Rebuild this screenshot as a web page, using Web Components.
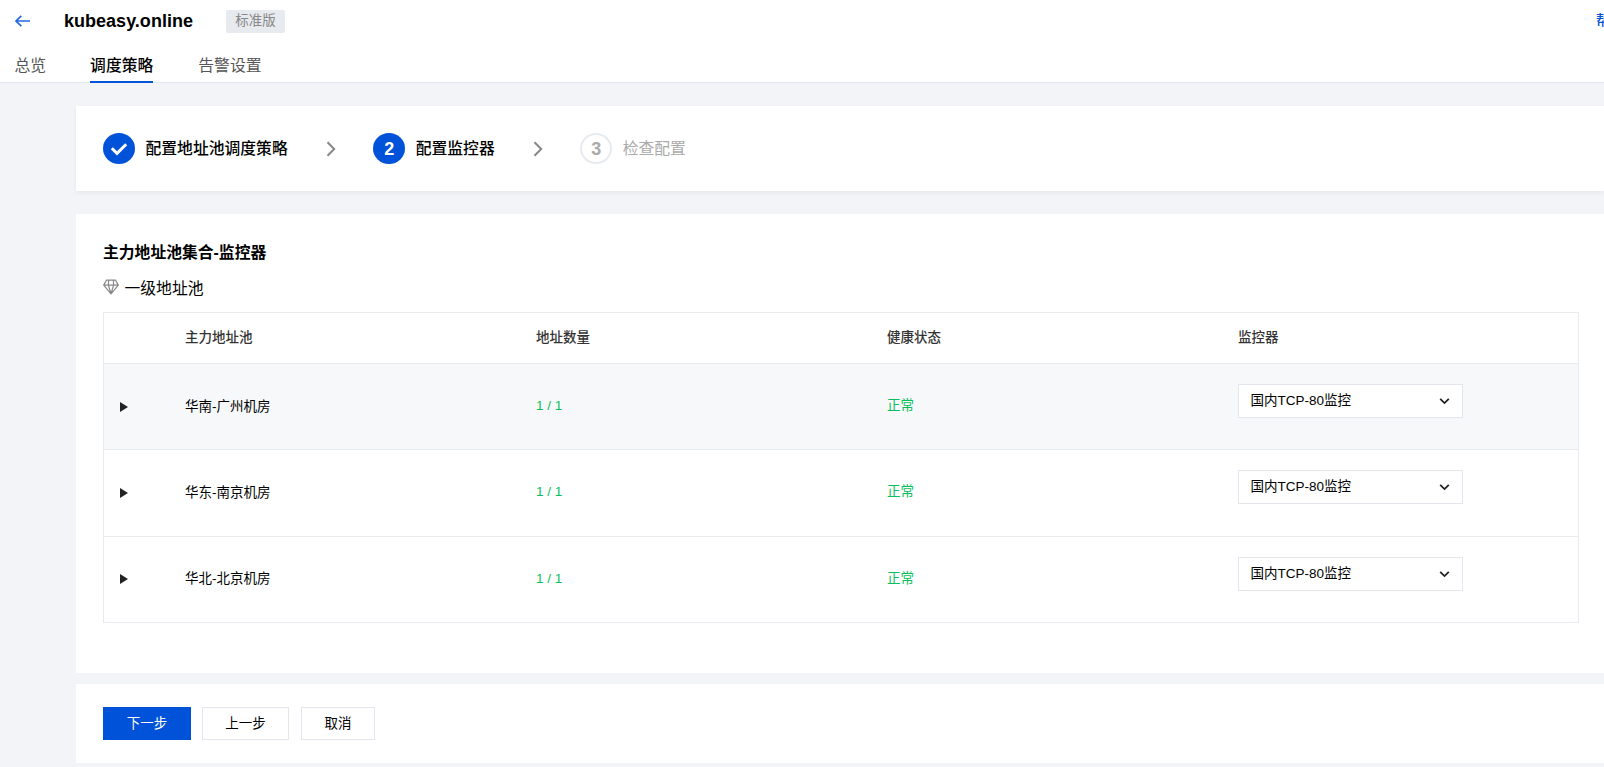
<!DOCTYPE html>
<html lang="zh-CN">
<head>
<meta charset="utf-8">
<title>kubeasy.online</title>
<style>
    :root {
        --blue: #0052d9;
        --green: #0abf5b;
        --line: #e7eaef;
        --page: #f2f4f8;
    }
    body {
        margin: 0;
        height: 767px;
        overflow: hidden;
        background: var(--page);
        color: #000;
        font: 13.5px/20px "Liberation Sans", "Noto Sans CJK SC", sans-serif;
    }
    main {
        display: flex;
        flex-direction: column;
        padding: 23px 0 0 76px;
    }
</style>
</head>
<body>
<page-header data-title="kubeasy.online" data-version="标准版" data-help="帮">
    <nav-tab>总览</nav-tab>
    <nav-tab active>调度策略</nav-tab>
    <nav-tab>告警设置</nav-tab>
</page-header>
<main>
    <page-card style="height: 85px; margin-bottom: 23px;" raised>
        <step-bar>
            <step-item data-state="done" data-number="1">配置地址池调度策略</step-item>
            <step-item data-state="current" data-number="2">配置监控器</step-item>
            <step-item data-state="wait" data-number="3">检查配置</step-item>
        </step-bar>
    </page-card>
    <page-card style="height: 459px; margin-bottom: 11px;">
        <pool-section data-header="主力地址池集合-监控器" data-level="一级地址池">
            <pool-table></pool-table>
        </pool-section>
    </page-card>
    <page-card style="height: 79px;">
        <action-bar>
            <action-button primary style="width: 88px;">下一步</action-button>
            <action-button style="width: 87px; margin-right: 1px;">上一步</action-button>
            <action-button style="width: 74px;">取消</action-button>
        </action-bar>
    </page-card>
</main>

<script>
class PageHeader extends HTMLElement {

    constructor() {
        super();
        this.attachShadow({ mode: 'open' });
    }

    connectedCallback() {
        this.shadowRoot.innerHTML = `
            <style>
                :host {
                    display: flex;
                    flex-direction: column;
                    box-sizing: border-box;
                    height: 83px;
                    background: #fff;
                    border-bottom: 1px solid #e3e6ef;
                }
                .top {
                    display: flex;
                    align-items: center;
                    height: 43px;
                    padding-left: 14px;
                    overflow: hidden;
                }
                svg { display: block; width: 17px; height: 14px; }
                h1 {
                    margin: 0 0 0 33px;
                    width: 162px;
                    font-size: 18px;
                    line-height: 24px;
                    letter-spacing: .02px;
                }
                .version {
                    box-sizing: border-box;
                    width: 59px;
                    height: 23px;
                    line-height: 21px;
                    text-align: center;
                    border-radius: 2px;
                    background: #e7eaef;
                    color: #888;
                }
                .help {
                    margin-left: auto;
                    margin-bottom: 1px;
                    width: 8px;
                    white-space: nowrap;
                    font-weight: 500;
                    color: var(--blue);
                }
                nav {
                    display: flex;
                    gap: 45px;
                    height: 40px;
                    padding-left: 14.5px;
                }
            </style>
            <div class="top">
                <svg viewBox="0 0 17 14" fill="none" stroke="#2468e0" stroke-width="1.7">
                    <path d="M7.3 1.8 2 7l5.3 5.2M2 7h14"/>
                </svg>
                <h1>${this.dataset.title}</h1>
                <span class="version">${this.dataset.version}</span>
                <span class="help">${this.dataset.help}</span>
            </div>
            <nav><slot></slot></nav>
        `;
    }
}

class NavTab extends HTMLElement {

    constructor() {
        super();
        this.attachShadow({ mode: 'open' });
    }

    connectedCallback() {
        this.shadowRoot.innerHTML = `
            <style>
                :host {
                    display: block;
                    box-sizing: border-box;
                    height: 40px;
                    padding-top: 12px;
                    font-size: 15.8px;
                    line-height: 24px;
                    color: #555;
                }
                /* the underline covers the header's bottom border */
                :host([active]) {
                    height: 41px;
                    margin-left: -1px;
                    border-bottom: 2px solid var(--blue);
                    color: #000;
                    font-weight: 500;
                }
            </style>
            <slot></slot>
        `;
    }
}

class PageCard extends HTMLElement {

    constructor() {
        super();
        this.attachShadow({ mode: 'open' });
    }

    connectedCallback() {
        this.shadowRoot.innerHTML = `
            <style>
                :host {
                    display: block;
                    box-sizing: border-box;
                    padding-left: 27px;
                    background: #fff;
                }
                :host([raised]) {
                    box-shadow: 0 2px 4px rgba(54, 58, 80, .06);
                }
            </style>
            <slot></slot>
        `;
    }
}

class StepBar extends HTMLElement {

    constructor() {
        super();
        this.attachShadow({ mode: 'open' });
    }

    connectedCallback() {
        this.shadowRoot.innerHTML = `
            <style>
                :host {
                    display: flex;
                    align-items: center;
                    height: 85px;
                }
            </style>
            <slot></slot>
        `;
    }
}

class StepItem extends HTMLElement {

    constructor() {
        super();
        this.attachShadow({ mode: 'open' });
    }

    connectedCallback() {
        const done = this.dataset.state === 'done';
        const mark = done
            ? '<svg width="18" height="14" viewBox="0 0 18 14" fill="none" stroke="#fff" stroke-width="3"><path d="M1.8 6.2 7 11.3 16.2 2.2"/></svg>'
            : this.dataset.number;

        this.shadowRoot.innerHTML = `
            <style>
                :host {
                    display: flex;
                    align-items: center;
                    font-size: 15.8px;
                    line-height: 24px;
                    font-weight: 500;
                }
                .mark {
                    display: flex;
                    align-items: center;
                    justify-content: center;
                    box-sizing: border-box;
                    width: 32px;
                    height: 31px;
                    margin-right: 10.5px;
                    border-radius: 50%;
                    background: var(--blue);
                    color: #fff;
                    font-size: 18px;
                    font-weight: bold;
                }
                .label { padding-top: 1px; }
                .arrow {
                    width: 10px;
                    height: 16px;
                    margin: 0 37px 0 38.5px;
                }
                :host([data-state="wait"]) {
                    color: #aaa;
                    font-weight: 400;
                }
                :host([data-state="wait"]) .mark {
                    border: 2px solid var(--line);
                    background: #fff;
                    color: #aaa;
                }
                :host([data-state="wait"]) .arrow { display: none; }
            </style>
            <span class="mark">${mark}</span>
            <span class="label"><slot></slot></span>
            <svg class="arrow" viewBox="0 0 10 16" fill="none" stroke="#888" stroke-width="2">
                <path d="M1.5 1.2 8.2 8 1.5 14.8"/>
            </svg>
        `;
    }
}

class PoolSection extends HTMLElement {

    constructor() {
        super();
        this.attachShadow({ mode: 'open' });
    }

    connectedCallback() {
        this.shadowRoot.innerHTML = `
            <style>
                :host {
                    display: block;
                    padding: 27px 25px 0 0;
                }
                h2 {
                    margin: 0 0 12px;
                    font-size: 15.8px;
                    line-height: 24px;
                }
                .level {
                    display: flex;
                    align-items: center;
                    gap: 5.5px;
                    height: 24px;
                    margin-bottom: 11px;
                    font-size: 15.8px;
                    line-height: 24px;
                }
                svg { width: 16px; height: 16px; margin-bottom: 5px; }
            </style>
            <h2>${this.dataset.header}</h2>
            <div class="level">
                <svg viewBox="0 0 16 16" fill="none" stroke="#888" stroke-width="1.2" stroke-linejoin="round">
                    <path d="M3.4 1.2h9.2l2.7 4.9L8 14.8.7 6.1zM.7 6.1h14.6M5.4 6.1 8 14.6l2.6-8.5M5.6 1.2l-.2 4.9M10.4 1.2l.2 4.9"/>
                </svg>
                <span>${this.dataset.level}</span>
            </div>
            <slot></slot>
        `;
    }
}

class PoolTable extends HTMLElement {

    constructor() {
        super();
        this.attachShadow({ mode: 'open' });
        this.pools = [
            { name: '华南-广州机房', count: '1 / 1', status: '正常', monitor: '国内TCP-80监控' },
            { name: '华东-南京机房', count: '1 / 1', status: '正常', monitor: '国内TCP-80监控' },
            { name: '华北-北京机房', count: '1 / 1', status: '正常', monitor: '国内TCP-80监控' }
        ];
    }

    connectedCallback() {
        this.render();
    }

    render() {
        let rowsHTML = '';
        for (let pool of this.pools) {
            rowsHTML += `
                <div class="row">
                    <svg class="toggle" viewBox="0 0 8 10"><path d="M0 0 8 5 0 10z" fill="#222"/></svg>
                    <span class="name">${pool.name}</span>
                    <span class="ok">${pool.count}</span>
                    <span class="ok">${pool.status}</span>
                    <monitor-select>${pool.monitor}</monitor-select>
                </div>
            `;
        }

        this.shadowRoot.innerHTML = `
            <style>
                :host {
                    display: block;
                    border: 1px solid var(--line);
                }
                .head, .row {
                    display: grid;
                    grid-template-columns: 81px repeat(4, 351px);
                    align-items: center;
                    box-sizing: border-box;
                }
                .head {
                    height: 50px;
                    padding-bottom: 1px;
                    color: #333;
                    font-weight: 500;
                }
                .row {
                    height: 86.33px;
                    border-top: 1px solid var(--line);
                }
                .head + .row { background: #f7f8fa; }
                .toggle { width: 8px; height: 10px; margin-left: 16px; }
                .name { padding-bottom: 0; }
                .ok { padding-bottom: 1px; color: var(--green); }
                monitor-select { margin-bottom: 11px; }
            </style>
            <div class="head">
                <span></span>
                <span>主力地址池</span>
                <span>地址数量</span>
                <span>健康状态</span>
                <span>监控器</span>
            </div>
            ${rowsHTML}
        `;
    }
}

class MonitorSelect extends HTMLElement {

    constructor() {
        super();
        this.attachShadow({ mode: 'open' });
    }

    connectedCallback() {
        this.shadowRoot.innerHTML = `
            <style>
                :host {
                    display: flex;
                    align-items: center;
                    justify-content: space-between;
                    box-sizing: border-box;
                    width: 225px;
                    height: 34px;
                    padding: 0 12.5px 0 11.5px;
                    border: 1px solid #e3e6ef;
                    background: #fff;
                }
                svg { width: 11px; height: 8px; }
            </style>
            <span><slot></slot></span>
            <svg viewBox="0 0 11 8" fill="none" stroke="#222" stroke-width="1.8">
                <path d="M1.2 1.8 5.5 6.1 9.8 1.8"/>
            </svg>
        `;
    }
}

class ActionBar extends HTMLElement {

    constructor() {
        super();
        this.attachShadow({ mode: 'open' });
    }

    connectedCallback() {
        this.shadowRoot.innerHTML = `
            <style>
                :host {
                    display: flex;
                    gap: 11px;
                    padding-top: 23px;
                }
            </style>
            <slot></slot>
        `;
    }
}

class ActionButton extends HTMLElement {

    constructor() {
        super();
        this.attachShadow({ mode: 'open' });
    }

    connectedCallback() {
        this.shadowRoot.innerHTML = `
            <style>
                :host {
                    display: block;
                    box-sizing: border-box;
                    height: 33px;
                    border: 1px solid #e3e6ef;
                    background: #fff;
                    line-height: 32px;
                    text-align: center;
                }
                :host([primary]) {
                    border-color: var(--blue);
                    background: var(--blue);
                    color: #fff;
                }
            </style>
            <slot></slot>
        `;
    }
}

customElements.define('page-header', PageHeader);
customElements.define('nav-tab', NavTab);
customElements.define('page-card', PageCard);
customElements.define('step-bar', StepBar);
customElements.define('step-item', StepItem);
customElements.define('pool-section', PoolSection);
customElements.define('monitor-select', MonitorSelect);
customElements.define('pool-table', PoolTable);
customElements.define('action-bar', ActionBar);
customElements.define('action-button', ActionButton);
</script>
</body>
</html>
